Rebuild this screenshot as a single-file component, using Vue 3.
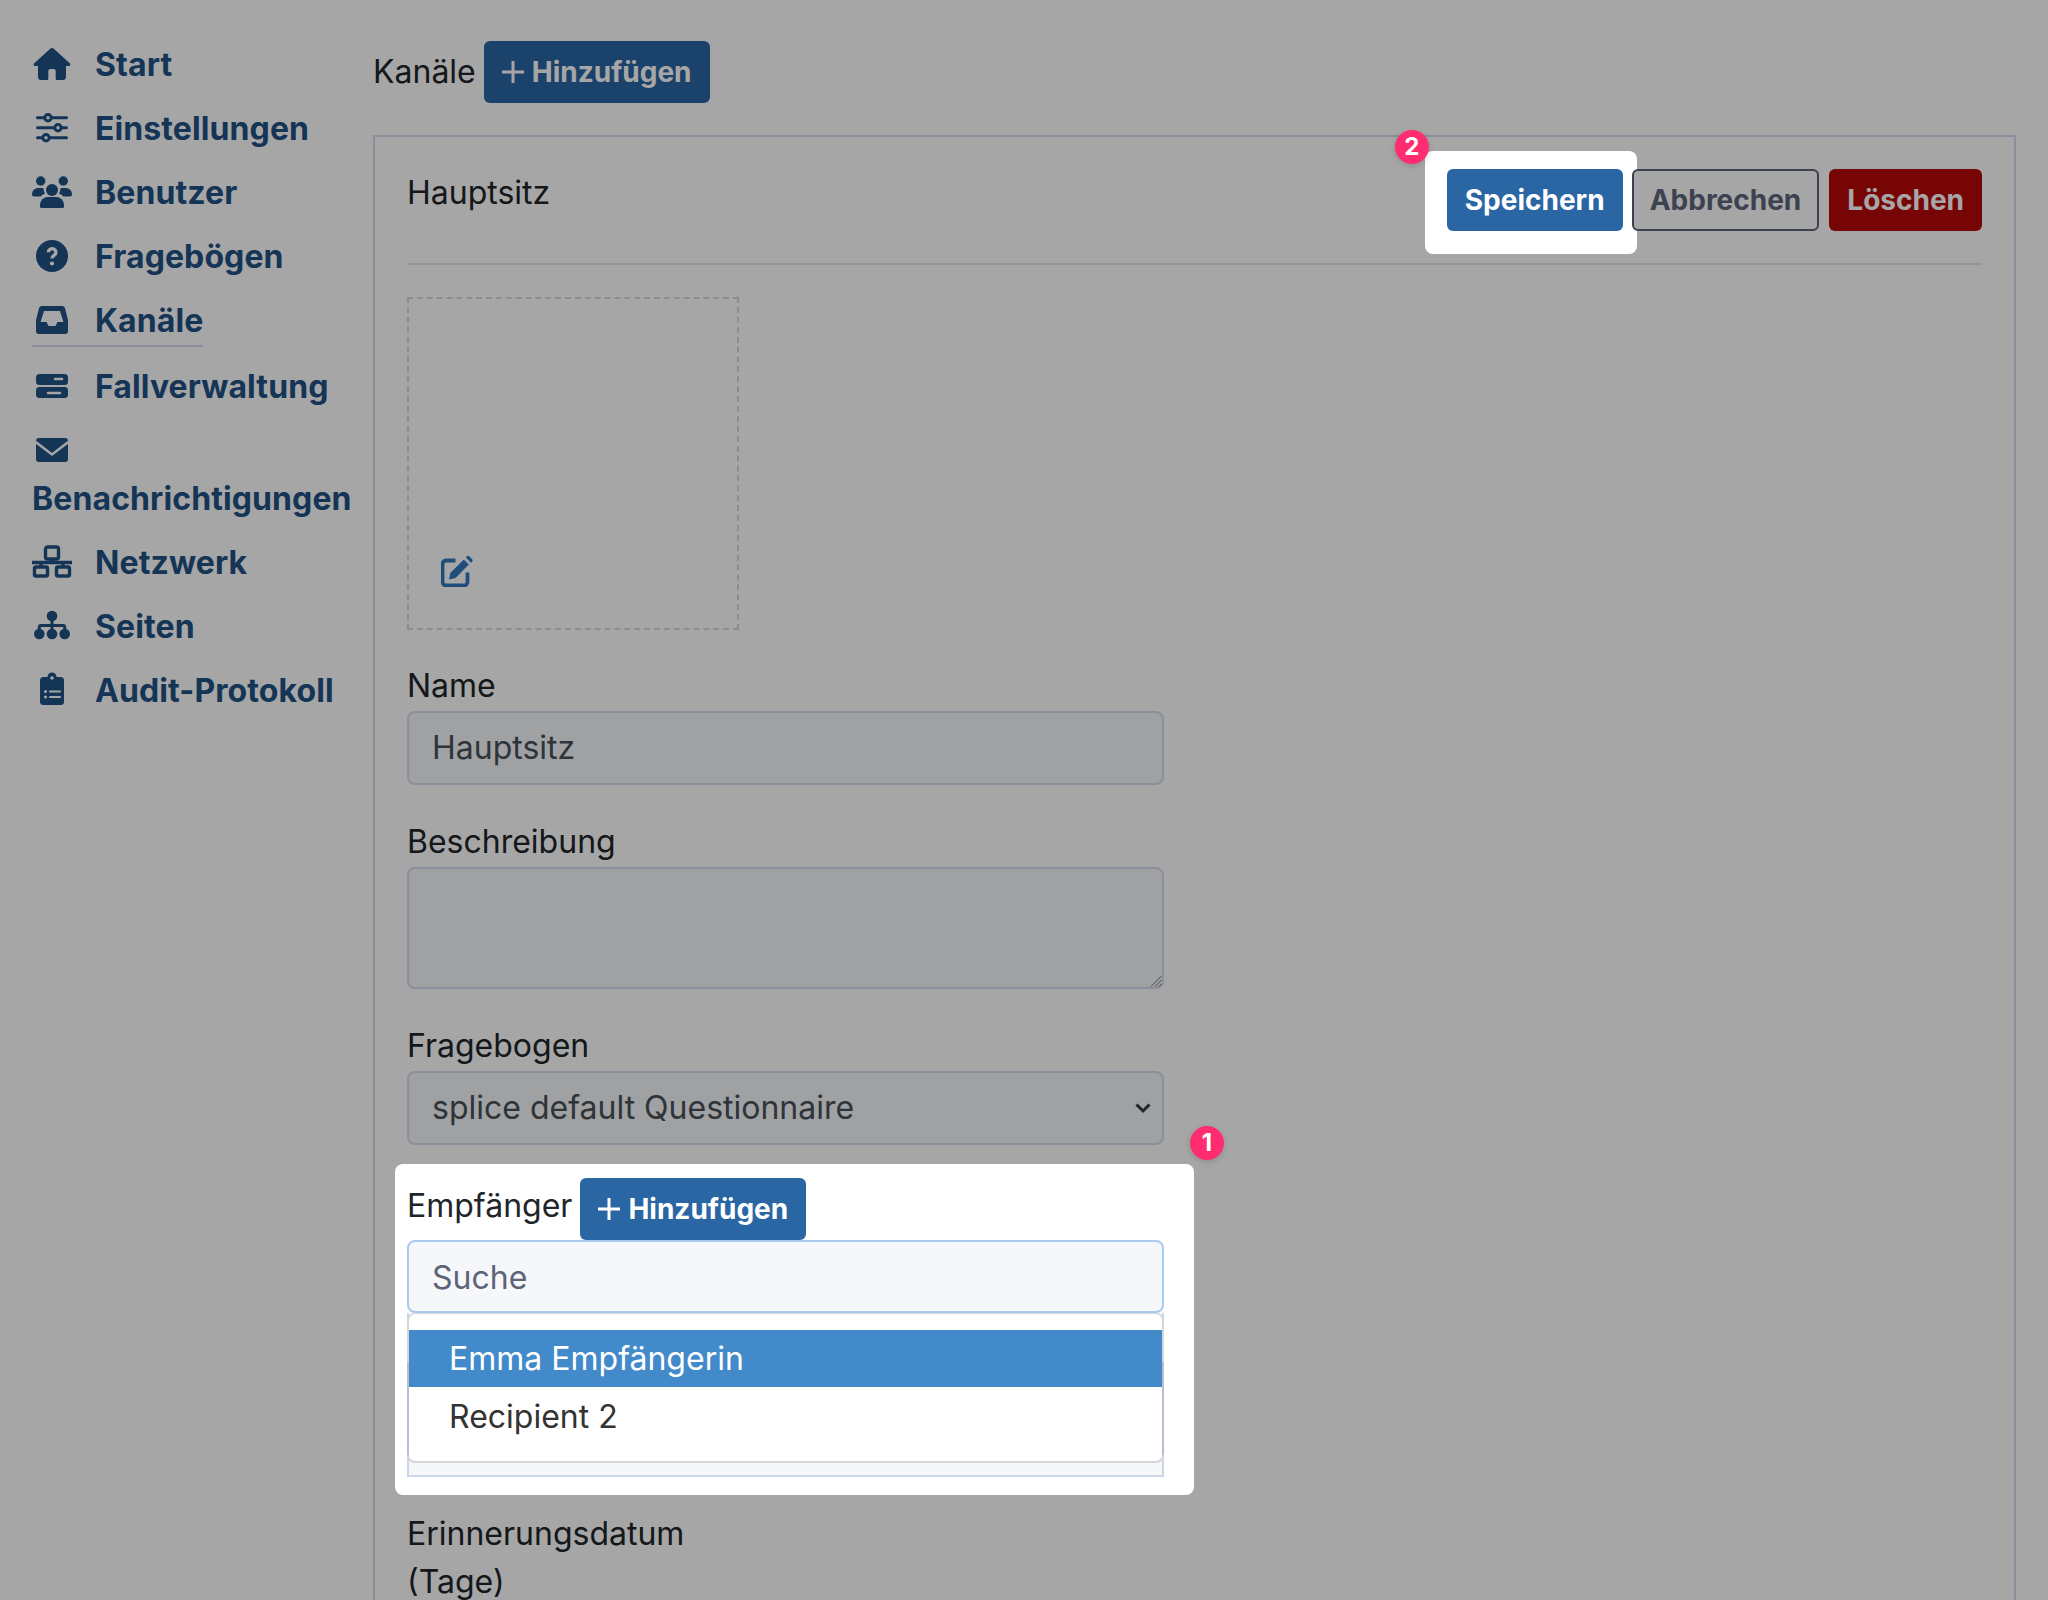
<script setup>
const navTop = [
  { label: 'Start', icon: 'home' },
  { label: 'Einstellungen', icon: 'sliders' },
  { label: 'Benutzer', icon: 'users' },
  { label: 'Fragebögen', icon: 'question' },
  { label: 'Kanäle', icon: 'inbox', active: true },
  { label: 'Fallverwaltung', icon: 'server' },
  { label: 'Benachrichtigungen', icon: 'mail' },
  { label: 'Netzwerk', icon: 'network' },
  { label: 'Seiten', icon: 'sitemap' },
  { label: 'Audit-Protokoll', icon: 'clipboard' },
]
</script>

<template>
  <div class="page">
    <nav class="sidebar">
      <a v-for="item in navTop" :key="item.label" class="nav-link" :class="{ active: item.active }">
        <svg class="nav-icon" width="40" height="40" viewBox="0 0 40 40">
          <path v-if="item.icon === 'home'" d="M18.5 4.6a2.2 2.2 0 0 1 3 0L37.5 19a1.6 1.6 0 0 1-1 3H34v11a3 3 0 0 1-3 3h-6.3a1 1 0 0 1-1-1v-8a2 2 0 0 0-2-2h-3.4a2 2 0 0 0-2 2v8a1 1 0 0 1-1 1H9a3 3 0 0 1-3-3V22H3.5a1.6 1.6 0 0 1-1-3z" />
          <g v-else-if="item.icon === 'sliders'">
            <path class="line" d="M5.5 9.7h29M5.5 19.7h29M5.5 29.7h29" />
            <circle class="ring" cx="16" cy="9.7" r="3.2" />
            <circle class="ring" cx="26" cy="19.7" r="3.2" />
            <circle class="ring" cx="14" cy="29.7" r="3.2" />
          </g>
          <g v-else-if="item.icon === 'users'">
            <circle cx="8.7" cy="9" r="4.7" />
            <circle cx="31.3" cy="9" r="4.7" />
            <circle cx="20" cy="18" r="6" />
            <path d="M8 33a8 8 0 0 1 8-8h8a8 8 0 0 1 8 8v1.5a1.5 1.5 0 0 1-1.5 1.5h-21A1.5 1.5 0 0 1 8 34.5z" />
            <path d="M0 22a6 6 0 0 1 6-6h5.500a8 8 0 0 0 1.500 5.500 11 11 0 0 0-4.500 3H2a2 2 0 0 1-2-2.500z" />
            <path d="M40 22a6 6 0 0 0-6-6h-5.500a8 8 0 0 1-1.500 5.500 11 11 0 0 1 4.500 3H38a2 2 0 0 0 2-2.500z" />
          </g>
          <g v-else-if="item.icon === 'question'">
            <circle cx="20" cy="20" r="16" />
            <path class="cut mark" d="M16.300 16.200a3.800 3.600 0 1 1 6 3c-1.500 1-2.300 1.700-2.300 3.300" />
            <circle class="white" cx="20" cy="27.500" r="2.100" />
          </g>
          <path v-else-if="item.icon === 'inbox'" fill-rule="evenodd" d="M10 6h20a3 3 0 0 1 3 2.300L36 20v11a3 3 0 0 1-3 3H7a3 3 0 0 1-3-3V20L7 8.300A3 3 0 0 1 10 6zM12 11l-3.500 11h6l2 4h7l2-4h6L28 11z" />
          <g v-else-if="item.icon === 'server'">
            <rect x="4" y="8" width="32" height="11" rx="3.500" />
            <rect x="4" y="21" width="32" height="11" rx="3.500" />
            <path class="cut" d="M23 13h7M16 27h12" />
          </g>
          <g v-else-if="item.icon === 'mail'">
            <rect x="4" y="8" width="32" height="24" rx="3" />
            <path class="cut" d="M3 11.500l17 13 17-13" />
          </g>
          <g v-else-if="item.icon === 'network'" class="outline">
            <rect x="13.500" y="5" width="13" height="12" rx="2" />
            <rect x="2.500" y="25" width="13" height="9" rx="1.500" />
            <rect x="24.500" y="25" width="13" height="9" rx="1.500" />
            <path d="M20 17v3M0 20.500h40M9 20.500V25M31 20.500V25" />
          </g>
          <g v-else-if="item.icon === 'sitemap'">
            <path class="line" d="M20 10v18M7.300 28v-7a1.500 1.500 0 0 1 1.500-1.500h22.400a1.500 1.500 0 0 1 1.500 1.500v7" />
            <circle cx="20" cy="10" r="5.300" />
            <circle cx="7.300" cy="28" r="5.300" />
            <circle cx="20" cy="28" r="5.300" />
            <circle cx="32.700" cy="28" r="5.300" />
          </g>
          <g v-else-if="item.icon === 'clipboard'">
            <circle cx="20" cy="7" r="4.500" />
            <rect x="8" y="7" width="24" height="28" rx="3.500" />
            <circle class="white" cx="20" cy="8" r="1.800" />
            <path class="cut thin" d="M18 21.500h10M18 27h10" />
            <circle class="white" cx="13.500" cy="21.500" r="1.500" />
            <circle class="white" cx="13.500" cy="27" r="1.500" />
          </g>
        </svg>
        <span class="nav-text">{{ item.label }}</span>
      </a>
    </nav>

    <main class="main">
      <div class="heading">
        <span>Kanäle</span>
        <button class="btn btn-primary add-btn">
          <svg class="plus" width="22" height="22" viewBox="0 0 22 22"><path d="M11 0v22M0 11h22" /></svg>
          <span>Hinzufügen</span>
        </button>
      </div>

      <section class="panel">
        <header class="panel-head">
          <span class="panel-title">Hauptsitz</span>
          <div class="actions">
            <div class="spot-wrap save">
              <div class="spot spot-save"></div>
              <span class="badge badge-save">2</span>
              <button class="btn btn-primary">Speichern</button>
            </div>
            <button class="btn btn-outline">Abbrechen</button>
            <button class="btn btn-danger">Löschen</button>
          </div>
        </header>

        <div class="image-box">
          <svg class="edit" width="32" height="32" viewBox="0 0 32 32">
            <path class="edit-frame" d="M14.500 5.500H5A3.500 3.500 0 0 0 1.500 9v18A3.500 3.500 0 0 0 5 30.500h18a3.500 3.500 0 0 0 3.500-3.500v-9.500" />
            <path d="M8 24.500l1.300-6.500L22.800 4.500l5 5L14.500 23z" />
            <path d="M24.800 2.500l1-1a2 2 0 0 1 2.800 0l2.400 2.400a2 2 0 0 1 0 2.800l-1 1z" />
          </svg>
        </div>

        <label class="field-label">Name</label>
        <div class="control">Hauptsitz</div>

        <label class="field-label gap">Beschreibung</label>
        <div class="control textarea">
          <svg class="grip" width="12" height="12" viewBox="0 0 12 12"><path d="M11.500 1L1 11.500M11.500 5L5 11.500M11.500 9L9 11.500" /></svg>
        </div>

        <label class="field-label gap">Fragebogen</label>
        <div class="control select">
          <span>splice default Questionnaire</span>
          <svg class="chevron" width="16" height="12" viewBox="0 0 16 12"><path d="M1.500 2.500L8 9l6.500-6.500" /></svg>
        </div>

        <div class="spot-wrap recipients">
          <div class="spot spot-recipients"></div>
          <span class="badge badge-recipients">1</span>
          <div class="recipients-head">
            <span>Empfänger</span>
            <button class="btn btn-primary add-btn">
              <svg class="plus" width="22" height="22" viewBox="0 0 22 22"><path d="M11 0v22M0 11h22" /></svg>
              <span>Hinzufügen</span>
            </button>
          </div>
          <div class="control search">Suche</div>
          <div class="under-list">
            <ul class="dropdown">
              <li class="option selected">Emma Empfängerin</li>
              <li class="option">Recipient 2</li>
            </ul>
          </div>
        </div>

        <label class="field-label reminder">Erinnerungsdatum (Tage)</label>
      </section>
    </main>

    <div class="overlay"></div>
  </div>
</template>

<style scoped>
.page {
  position: relative;
  display: flex;
  height: 1600px;
  overflow: hidden;
  background: #fff;
  color: #212529;
  font-family: Inter, "Liberation Sans", sans-serif;
  font-size: 32px;
  line-height: 48px;
}

.overlay {
  position: absolute;
  inset: 0;
  z-index: 2;
  background: rgba(0, 0, 0, 0.35);
}

/* sidebar */
.sidebar {
  width: 341px;
  margin-left: 32px;
  padding-top: 33px;
  flex-shrink: 0;
  box-sizing: border-box;
}

.nav-link {
  display: block;
  width: fit-content;
  max-width: 320px;
  padding: 8px 0;
  font-weight: 700;
  letter-spacing: 0.1px;
  color: #1f5285;
}

.nav-link.active {
  padding-bottom: 0;
  margin-bottom: 8px;
  border-bottom: 2px solid #d5dcef;
}

.nav-icon {
  display: inline-block;
  vertical-align: -8px;
  margin-right: 23px;
  fill: #1f5285;
}

.line {
  fill: none;
  stroke: #1f5285;
  stroke-width: 3;
  stroke-linecap: round;
}

.ring {
  fill: #fff;
  stroke: #1f5285;
  stroke-width: 3;
}

.cut {
  fill: none;
  stroke: #fff;
  stroke-width: 2.500;
  stroke-linecap: round;
}

.cut.thin {
  stroke-width: 2.200;
}

.cut.mark {
  stroke-width: 3.400;
  stroke-linecap: butt;
}

.white {
  fill: #fff;
}

.outline rect,
.outline path {
  fill: none;
  stroke: #1f5285;
  stroke-width: 3.400;
}

/* main column */
.main {
  flex: 1;
  min-width: 0;
  padding: 41px 32px 0 0;
}

.heading {
  display: flex;
  align-items: center;
  gap: 8px;
  height: 62px;
  margin-bottom: 32px;
}

.btn {
  height: 62px;
  padding: 0 16px;
  box-sizing: border-box;
  border: 2px solid transparent;
  border-radius: 6px;
  font-family: inherit;
  font-size: 28px;
  font-weight: 700;
  line-height: 1;
  white-space: nowrap;
}

.btn-primary {
  background: #2a66a3;
  color: #fff;
}

/* sits in front of the overlay and the save highlight, so it carries the dimmed colours itself */
.btn-outline {
  position: relative;
  z-index: 4;
  background: #a6a6a6;
  border-color: #3c4250;
  color: #3c4250;
}

.btn-danger {
  background: #b90808;
  color: #fff;
}

.add-btn {
  display: flex;
  align-items: center;
  gap: 8px;
}

.plus path {
  fill: none;
  stroke: #fff;
  stroke-width: 3;
}

.panel {
  height: 1600px;
  padding: 32px;
  box-sizing: border-box;
  border: 2px solid #d5dcef;
}

.panel-head {
  display: flex;
  justify-content: space-between;
  align-items: flex-start;
  height: 94px;
  border-bottom: 2px solid #e6e6e6;
}

.actions {
  display: flex;
  gap: 10px;
}

.spot-wrap {
  position: relative;
  z-index: 3;
}

.spot-wrap.save {
  margin-right: -1px;
}

.spot-wrap > .btn,
.recipients-head,
.search,
.under-list {
  position: relative;
}

.spot {
  position: absolute;
  background: #fff;
  border-radius: 8px;
}

.spot-save {
  inset: -18px -14px -23px -22px;
}

.spot-recipients {
  top: -14px;
  left: -12px;
  width: 799px;
  height: 331px;
}

.badge {
  position: absolute;
  z-index: 1;
  width: 34px;
  height: 34px;
  border-radius: 50%;
  background: #ff2d6f;
  color: #fff;
  font-size: 24px;
  font-weight: 700;
  line-height: 34px;
  text-align: center;
  box-shadow: 0 2px 6px rgba(0, 0, 0, 0.15);
}

.badge-save {
  top: -39px;
  left: -52px;
}

.badge-recipients {
  top: -52px;
  left: 783px;
}

.image-box {
  display: flex;
  align-items: flex-end;
  width: 332px;
  height: 333px;
  margin-top: 32px;
  padding: 0 0 41px 32px;
  box-sizing: border-box;
  border: 2px dashed #d3d9e6;
}

.edit {
  fill: #3079c0;
}

.edit-frame {
  fill: none;
  stroke: #3079c0;
  stroke-width: 3.800;
}

.field-label {
  display: block;
  margin-top: 32px;
  padding-bottom: 1px;
}

.field-label.gap {
  margin-top: 33px;
}

.control {
  position: relative;
  width: 757px;
  height: 74px;
  padding: 0 23px;
  box-sizing: border-box;
  border: 2px solid #d5dcef;
  border-radius: 8px;
  background: #f5f7fb;
  color: #495057;
  line-height: 70px;
}

.textarea {
  height: 122px;
}

.grip {
  position: absolute;
  right: 0;
  bottom: 0;
}

.grip path {
  fill: none;
  stroke: #6a6f78;
  stroke-width: 1;
}

.select {
  display: flex;
  justify-content: space-between;
  align-items: center;
  padding-right: 11px;
}

.chevron path {
  fill: none;
  stroke: #343a40;
  stroke-width: 3;
}

.recipients {
  width: 757px;
  margin-top: 33px;
}

.recipients-head {
  display: flex;
  align-items: flex-start;
  gap: 8px;
  height: 62px;
}

.recipients-head > span {
  margin-top: 4px;
}

.search {
  height: 73px;
  border-color: #a9c9ee;
  color: #5c6577;
  line-height: 71px;
}

.under-list {
  height: 164px;
  box-sizing: border-box;
  background: #f5f7fb;
  border: 2px solid #ccd6e6;
  border-top: 0;
}

.dropdown {
  position: relative;
  left: -2px;
  width: 757px;
  height: 150px;
  margin: 0;
  padding: 16px 0 0;
  box-sizing: border-box;
  list-style: none;
  background: #fff;
  border: 2px solid #d4d6da;
  border-top-width: 1px;
  border-radius: 8px;
}

/* the box behind shows through the lower part of the list's side borders */
.dropdown::before,
.dropdown::after {
  content: '';
  position: absolute;
  top: 48px;
  bottom: 6px;
  width: 2px;
  background: #b5bfd0;
}

.dropdown::before {
  left: -2px;
}

.dropdown::after {
  right: -2px;
}

.option {
  height: 57px;
  padding-left: 40px;
  line-height: 60px;
  color: #333;
}

.option.selected {
  background: #428aca;
  color: #fff;
  line-height: 57px;
}

.reminder {
  width: 330px;
  margin-top: 33px;
}
</style>
